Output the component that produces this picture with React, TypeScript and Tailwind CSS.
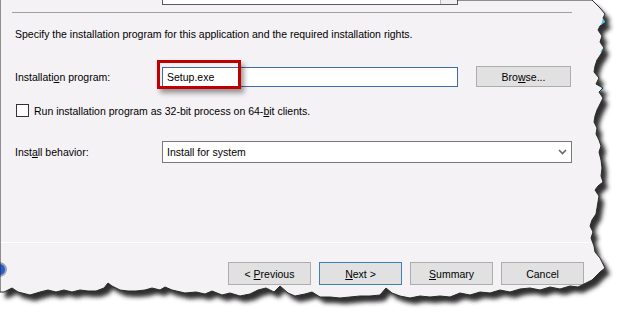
import React from "react";

const font = "font-['Liberation_Sans',Arial,sans-serif]";

// torn-paper outline of the cropped dialog
const edge: [number, number][] = [
  [0, 0], [592, 0], [600, 8], [605, 14], [603, 18], [606, 22], [600, 26], [598, 30], [602, 36],
  [600, 42], [604, 48], [601, 54], [597, 60], [595, 66], [594, 72], [599, 78], [596, 84],
  [603, 88], [599, 92], [603, 98], [600, 104], [597, 110], [595, 116], [594, 122], [597, 128],
  [596, 134], [599, 140], [601, 146], [599, 152], [601, 160], [602, 168], [601, 176],
  [603, 182], [598, 186], [595, 190], [599, 196], [598, 202], [597, 208], [596, 214],
  [592, 220], [590, 226], [593, 232], [591, 238], [594, 246], [595, 252], [600, 258],
  [602, 262], [605, 268], [600, 272], [596, 276], [592, 280], [586, 283], [578, 287],
  [570, 286], [560, 289], [550, 287], [540, 290], [530, 288], [520, 289], [510, 292],
  [500, 290], [490, 293], [480, 292], [470, 295], [460, 293], [450, 297], [440, 296],
  [430, 297], [420, 296], [410, 298], [400, 296], [392, 293], [386, 288], [380, 295],
  [370, 296], [360, 296], [350, 297], [340, 298], [330, 297], [320, 297], [312, 292],
  [305, 294], [295, 296], [288, 293], [280, 286], [274, 292], [266, 288], [258, 290],
  [250, 294], [240, 296], [230, 293], [222, 295], [212, 291], [205, 294], [196, 292],
  [185, 293], [172, 290], [165, 287], [160, 290], [152, 288], [145, 290], [136, 291],
  [128, 291], [120, 290], [112, 286], [108, 283], [104, 288], [96, 291], [88, 291],
  [80, 290], [72, 292], [64, 290], [56, 292], [48, 290], [40, 292], [30, 295], [18, 292],
  [12, 288], [8, 290], [4, 292], [0, 292],
];

const poly = edge.map(([x, y]) => `${x},${y}`).join(" ");
const outside = "M0 0H634V325H0Z M" + edge.map(([x, y]) => `${x} ${y}`).join(" L") + "Z";
const strokeLine = [[457, 0], ...edge.slice(1), [0, 0]].map(([x, y]) => `${x},${y}`).join(" ");

function Btn({ children, primary }: { children: React.ReactNode; primary?: boolean }) {
  return (
    <div
      className={`w-[83px] h-[23px] flex items-center justify-center bg-[#e1e1e1] border ${
        primary ? "border-[#3c7fb1]" : "border-[#adadad]"
      }`}
    >
      <span>{children}</span>
    </div>
  );
}

export default function App() {
  return (
    <div className={`relative w-[634px] h-[325px] bg-white overflow-hidden text-[10.5px] leading-[14px] text-black ${font}`}>
      <div className="flex flex-col w-[634px] h-[325px] bg-[#f5f2f5]">
        <div className="ml-[162px] w-[296px] h-[5px] flex justify-end bg-white border-x border-b border-[#5a5a5a]">
          <div className="w-[17px] h-[4px] bg-[#f0f0f0] border-l border-[#b8b8b8]" />
        </div>
        <div className="mt-[7px] ml-[12px] w-[560px] h-px bg-[#a0a0a0]" />

        <p className="mt-[14px] pl-[15px]">
          Specify the installation program for this application and the required installation rights.
        </p>

        <div className="mt-[25px] flex items-center pl-[15px] h-[21px]">
          <span className="w-[147px]">
            Installati<u>o</u>n program:
          </span>
          <div className="w-[296px] h-[20px] bg-white border border-[#3a6ea5] flex items-center pl-[4px]">
            Setup.exe
          </div>
          <div className="ml-[18px] w-[95px] h-[21px] bg-[#e1e1e1] border border-[#adadad] flex items-center justify-center">
            <span>
              Bro<u>w</u>se...
            </span>
          </div>
        </div>

        <div className="mt-[17px] flex items-center h-[13px]">
          <div className="ml-[16px] w-[13px] h-[13px] bg-white border border-[#333]" />
          <span className="ml-[5px]">
            Run installation program as 32-bit process on 64-<u>b</u>it clients.
          </span>
        </div>

        <div className="mt-[24px] flex items-center pl-[15px] h-[22px]">
          <span className="w-[147px]">
            Inst<u>a</u>ll behavior:
          </span>
          <div className="w-[410px] h-[22px] bg-white border border-[#7a7a7a] flex items-center justify-between pl-[4px] pr-[4px]">
            <span>Install for system</span>
            <svg width="9" height="6" viewBox="0 0 9 6">
              <path d="M1 1 L4.5 4.5 L8 1" fill="none" stroke="#666" strokeWidth="1.6" />
            </svg>
          </div>
        </div>

        <div className="mt-[79px] w-[590px] h-px bg-white" />

        <div className="mt-[19px] flex items-start gap-[8px] pr-[50px]">
          <div className="-ml-[8px] w-[15px] h-[15px] rounded-full bg-[#2a5fc8] border-2 border-[#9aa4b8]" />
          <div className="flex-1" />
          <Btn>
            &lt; <u>P</u>revious
          </Btn>
          <Btn primary>
            <u>N</u>ext &gt;
          </Btn>
          <Btn>
            <u>S</u>ummary
          </Btn>
          <Btn>Cancel</Btn>
        </div>
      </div>

      {/* red highlight around the program name */}
      <div className="absolute left-[157px] top-[60px] w-[84px] h-[29px] border-[3px] border-[#c00000] shadow-[3px_4px_5px_rgba(0,0,0,0.4)]" />

      {/* torn edge overlay */}
      <svg className="absolute inset-0 pointer-events-none" width="634" height="325" viewBox="0 0 634 325">
        <defs>
          <clipPath id="out">
            <path d={outside} clipRule="evenodd" />
          </clipPath>
          <filter id="blur" x="-10%" y="-10%" width="120%" height="120%">
            <feGaussianBlur stdDeviation="2.2" />
          </filter>
        </defs>
        <path d={outside} fill="#fff" fillRule="evenodd" />
        <g clipPath="url(#out)">
          <polygon points={poly} transform="translate(5 6)" fill="#2e2e2e" filter="url(#blur)" />
        </g>
        <polygon points="603,18 606,22 601,25" fill="#56c3ee" />
        <polygon points="603,48 604,50 600,52" fill="#56c3ee" />
        <polygon points="602,88 604,90 599,92" fill="#56c3ee" />
        <polyline points={strokeLine} fill="none" stroke="#2b2b2b" strokeWidth="1" />
      </svg>
    </div>
  );
}
